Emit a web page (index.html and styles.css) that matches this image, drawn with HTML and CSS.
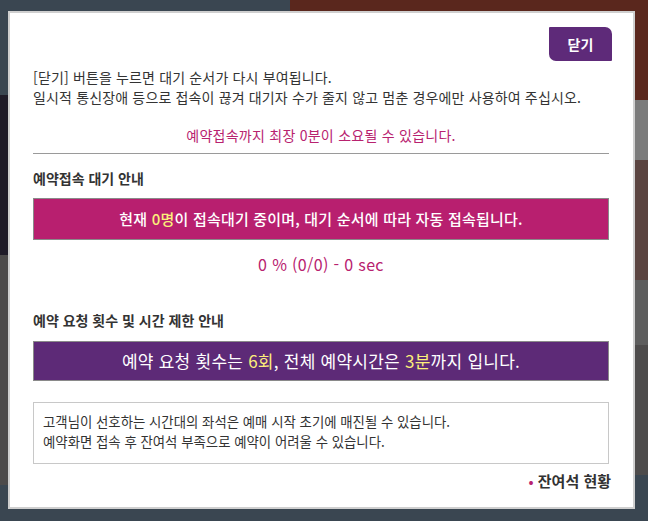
FILE: index.html
```html
<!DOCTYPE html>
<html lang="ko">
<head>
<meta charset="utf-8">
<title>예약접속 대기 안내</title>
<link rel="stylesheet" href="styles.css">
</head>
<body>
<div class="modal">
  <div class="btn-row">
    <button class="close-btn" type="button">닫기</button>
  </div>
  <p class="notice">[닫기] 버튼을 누르면 대기 순서가 다시 부여됩니다.<br>일시적 통신장애 등으로 접속이 끊겨 대기자 수가 줄지 않고 멈춘 경우에만 사용하여 주십시오.</p>
  <p class="eta">예약접속까지 최장 0분이 소요될 수 있습니다.</p>
  <hr class="divider">
  <h3 class="sec-title">예약접속 대기 안내</h3>
  <div class="bar bar-magenta">현재 <span class="hl">0명</span>이 접속대기 중이며, 대기 순서에 따라 자동 접속됩니다.</div>
  <p class="progress">0 % (0/0) - 0 sec</p>
  <h3 class="sec-title sec-title-2">예약 요청 횟수 및 시간 제한 안내</h3>
  <div class="bar bar-purple">예약 요청 횟수는 <span class="hl">6회</span>, 전체 예약시간은 <span class="hl">3분</span>까지 입니다.</div>
  <div class="info-box">고객님이 선호하는 시간대의 좌석은 예매 시작 초기에 매진될 수 있습니다.<br>예약화면 접속 후 잔여석 부족으로 예약이 어려울 수 있습니다.</div>
  <div class="seat-link"><span class="dot">•</span> 잔여석 현황</div>
</div>
</body>
</html>
```
FILE: styles.css
```css
html, body {
  margin: 0;
  padding: 0;
}
body {
  width: 648px;
  height: 521px;
  overflow: hidden;
  font-family: "Noto Sans CJK KR", "Noto Sans", sans-serif;
  color: #333;
  background-color: #3a4651;
  background-image:
    linear-gradient(#5a271d, #5a271d),
    linear-gradient(#7b7b7b, #7b7b7b),
    linear-gradient(#5a4440, #5a4440),
    linear-gradient(#5d5d5d, #5d5d5d),
    linear-gradient(#4d4b4b, #4d4b4b),
    linear-gradient(#1f1b28, #1f1b28),
    linear-gradient(#4c4a4a, #4c4a4a);
  background-repeat: no-repeat;
  background-position:
    290px 0,
    634px 100px,
    634px 160px,
    634px 280px,
    634px 345px,
    0 95px,
    0 255px;
  background-size:
    358px 100px,
    14px 60px,
    14px 120px,
    14px 65px,
    14px 130px,
    8px 160px,
    8px 230px;
}
.modal {
  box-sizing: border-box;
  margin: 11px 0 0 8px;
  width: 627px;
  height: 498px;
  background: #fff;
  border: 2px solid #cfcfcf;
  padding: 14px 24px 0 23px;
}
.btn-row {
  display: flex;
  justify-content: flex-end;
  margin-right: -3px;
}
.close-btn {
  width: 63px;
  height: 34px;
  border: 0;
  border-radius: 1px 7px 1px 7px;
  background: #5e2a79;
  color: #fff;
  font-family: "Noto Sans CJK KR", sans-serif;
  font-weight: 700;
  font-size: 14px;
  padding: 0;
}
.notice {
  margin: 6px 0 0;
  font-size: 14px;
  line-height: 20px;
  letter-spacing: 0.15px;
  color: #333;
}
.eta {
  margin: 18px 0 0;
  text-align: center;
  font-size: 14px;
  line-height: 20px;
  letter-spacing: 0.25px;
  color: #b8226f;
}
.divider {
  margin: 8px 0 0;
  border: 0;
  border-top: 1px solid #9a9a9a;
  height: 0;
}
.sec-title {
  margin: 14px 0 0;
  font-size: 14px;
  line-height: 20px;
  font-weight: 700;
  letter-spacing: 0;
  color: #333;
}
.sec-title-2 {
  margin-top: 36px;
}
.bar {
  box-sizing: border-box;
  margin-top: 10px;
  border: 1px solid #8a8a8a;
  color: #fff;
  text-align: center;
}
.bar-magenta {
  height: 42px;
  line-height: 40px;
  background: #b81f6f;
  font-size: 15px;
  font-weight: 500;
  letter-spacing: 0.2px;
}
.bar-purple {
  margin-top: 11px;
  height: 40px;
  line-height: 37px;
  background: #5d2a77;
  font-size: 17px;
  letter-spacing: 0.25px;
}
.hl {
  color: #fbef7a;
}
.progress {
  margin: 14px 0 0;
  text-align: center;
  font-size: 16px;
  line-height: 20px;
  letter-spacing: 0.35px;
  color: #b8226f;
}
.info-box {
  box-sizing: border-box;
  margin-top: 21px;
  height: 62px;
  border: 1px solid #c8c8c8;
  padding: 8px 9px 0;
  font-size: 13.4px;
  line-height: 20px;
  letter-spacing: 0;
  color: #333;
}
.seat-link {
  margin: 7px -2px 0 0;
  text-align: right;
  font-size: 15px;
  line-height: 20px;
  font-weight: 700;
  letter-spacing: 0;
  color: #333;
}
.dot {
  color: #b8226f;
  font-weight: 400;
}
```
